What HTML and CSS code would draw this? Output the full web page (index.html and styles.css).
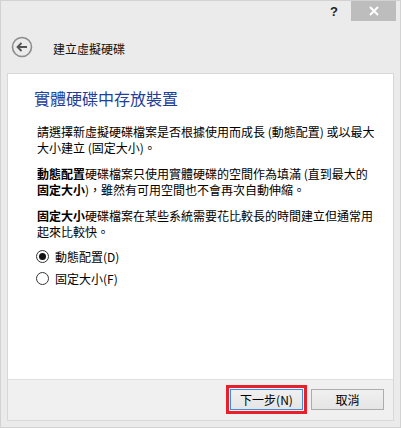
FILE: index.html
```html
<!DOCTYPE html>
<html lang="zh-Hant">
<head>
    <meta charset="UTF-8">
    <title>建立虛擬硬碟</title>
    <link rel="stylesheet" href="styles.css">
</head>
<body>
    <div class="window">
        <div class="titlebar">
            <span class="help">?</span>
            <span class="close">
                <svg width="10" height="10" viewBox="0 0 10 10"><path d="M1 1L9 9M9 1L1 9" stroke="#fff" stroke-width="2"/></svg>
            </span>
        </div>

        <div class="header">
            <svg class="back" width="22" height="22" viewBox="0 0 22 22">
                <circle cx="11" cy="11" r="9.5" fill="none" stroke="#8c8c8c" stroke-width="1.6"/>
                <path d="M16 11H6.5M10.5 7L6.5 11L10.5 15" fill="none" stroke="#555" stroke-width="1.8"/>
            </svg>
            <span class="header-title">建立虛擬硬碟</span>
        </div>

        <div class="panel">
            <div class="content">
                <h1>實體硬碟中存放裝置</h1>
                <p>請選擇新虛擬硬碟檔案是否根據使用而成長 (動態配置) 或以最大大小建立 (固定大小)。</p>
                <p><b>動態配置</b>硬碟檔案只使用實體硬碟的空間作為填滿 (直到最大的<br><b>固定大小</b>)，雖然有可用空間也不會再次自動伸縮。</p>
                <p><b>固定大小</b>硬碟檔案在某些系統需要花比較長的時間建立但通常用起來比較快。</p>
                <label class="option"><input type="radio" name="kind" checked>動態配置(D)</label>
                <label class="option"><input type="radio" name="kind">固定大小(F)</label>
            </div>
            <div class="footer">
                <button class="btn btn-default">下一步(N)</button>
                <button class="btn">取消</button>
            </div>
        </div>
    </div>
</body>
</html>
```

FILE: styles.css
```css
* { margin: 0; padding: 0; box-sizing: border-box; }
body {
    font-family: "Noto Sans CJK TC", "Liberation Sans", sans-serif;
    font-size: 12px;
    color: #000;
    background: #ebebeb;
}
.window {
    width: 401px;
    height: 428px;
    background: #ebebeb;
    border: 1px solid #d2d2d2;
    display: flex;
    flex-direction: column;
}
.titlebar {
    height: 20px;
    display: flex;
    justify-content: flex-end;
    align-items: stretch;
    padding-right: 4px;
}
.help {
    font-family: "Liberation Sans", sans-serif;
    font-weight: bold;
    font-size: 13px;
    color: #222;
    width: 30px;
    line-height: 22px;
    text-align: center;
    margin-right: 2px;
}
.close {
    width: 45px;
    background: #bdbdbd;
    display: flex;
    align-items: center;
    justify-content: center;
}
.header {
    height: 52px;
    display: flex;
    align-items: center;
    padding-left: 10px;
}
.back { margin-right: 20px; }
.header-title {
    font-size: 12px;
    color: #111;
    padding-top: 2px;
}
.panel {
    margin: 0 6px;
    height: 348px;
    border: 1px solid #d8d8d8;
    display: flex;
    flex-direction: column;
}
.content {
    flex: 1;
    background: #fff;
    padding: 14px 13px 0 29px;
}
h1 {
    font-size: 16px;
    font-weight: normal;
    color: #1f3f9a;
    line-height: 20px;
    margin-left: -3px;
    margin-bottom: 16px;
}
p {
    line-height: 16px;
    margin-bottom: 10px;
}
p:last-of-type { margin-bottom: 5px; }
b { font-weight: bold; }
.option {
    display: flex;
    align-items: center;
    height: 22px;
    margin-left: -1px;
}
.option input {
    appearance: none;
    width: 13px;
    height: 13px;
    border: 1px solid #333;
    border-radius: 50%;
    background: #fff;
    margin-right: 6px;
    display: grid;
    place-items: center;
}
.option input:checked::after {
    content: "";
    width: 7px;
    height: 7px;
    border-radius: 50%;
    background: #111;
}
.footer {
    height: 41px;
    border-top: 1px solid #dfdfdf;
    background: #f0f0f0;
    display: flex;
    justify-content: flex-end;
    align-items: flex-start;
    gap: 8px;
    padding: 9px 9px 0 0;
}
.btn {
    width: 73px;
    height: 21px;
    font-family: inherit;
    font-size: 12px;
    color: #000;
    border: 1px solid #acacac;
    background: linear-gradient(#f0f0f0, #e5e5e5);
}
.btn-default {
    border-color: #3c8ee0;
    outline: 3px solid #e8202a;
    outline-offset: 1px;
}
```
